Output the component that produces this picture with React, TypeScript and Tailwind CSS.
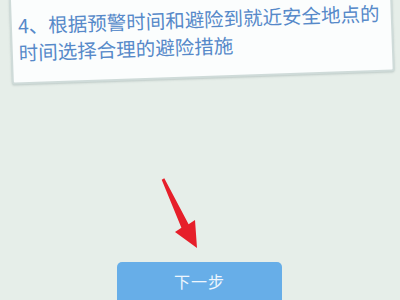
export default function App() {
  return (
    <div
      className="relative w-[400px] h-[300px] overflow-hidden bg-[#e6eee9] flex flex-col"
      style={{ fontFamily: '"Noto Sans CJK SC", "Liberation Sans", sans-serif' }}
    >
      <div className="ml-[10px] mt-[-27px] w-[383px] rotate-[-2deg] bg-[#fbfdfd] border-2 border-[#cfdbd9] rounded-[3px] shadow-[0_1px_2px_rgba(120,140,140,0.35)] pl-[6px] pr-2 pt-[30px] pb-[17px]">
        <p className="text-[19.5px] leading-[27px] text-[#5689c9]">
          4、根据预警时间和避险到就近安全地点的
          <br />
          时间选择合理的避险措施
        </p>
      </div>

      <svg className="absolute left-0 top-0" width="400" height="300" viewBox="0 0 400 300">
        <polygon
          points="161.7,179.7 164.3,178.3 188.6,224.2 195,220 197,248 175,232 181.4,227.8"
          fill="#e61f2a"
        />
      </svg>

      <div className="mt-auto ml-[117px] w-[165px] h-[38px] rounded-t-[5px] bg-[#67aee8] flex items-center justify-center">
        <span className="text-[16px] text-[#eef6fd] tracking-[1px]">下一步</span>
      </div>
    </div>
  );
}
